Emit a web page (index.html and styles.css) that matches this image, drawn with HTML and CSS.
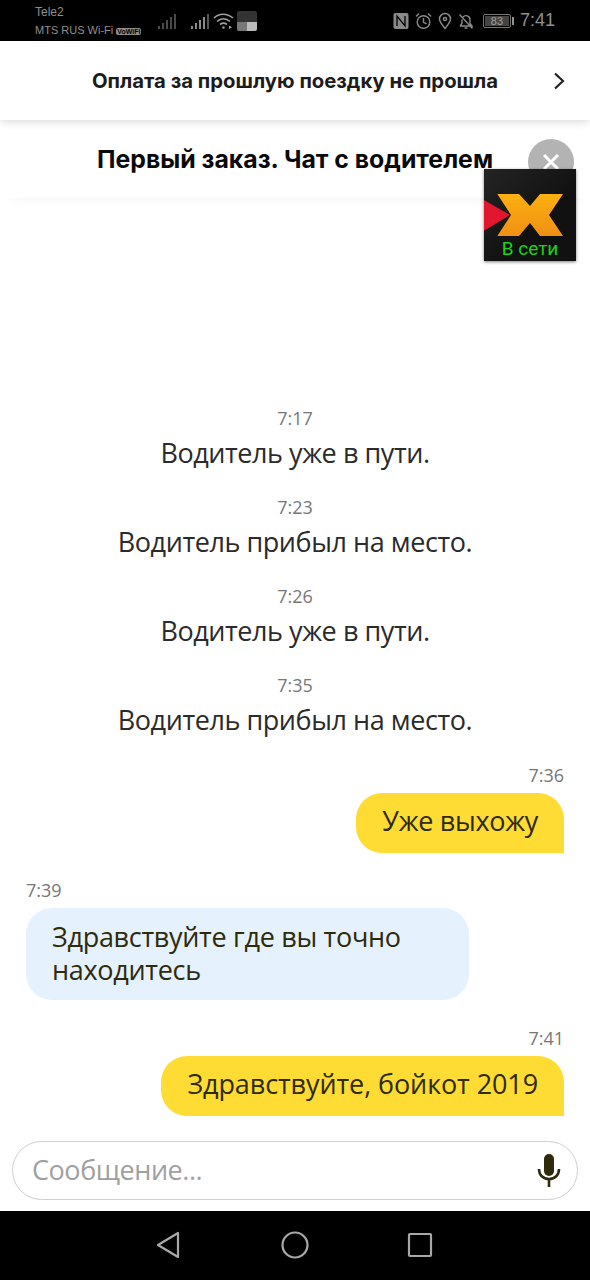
FILE: index.html
```html
<!DOCTYPE html>
<html lang="ru">
<head>
  <meta charset="UTF-8" />
  <title>Чат с водителем</title>
  <link rel="stylesheet" href="styles.css">
</head>
<body>
<div class="phone">

  <div class="statusBar">
    <div class="carriers">
      <div>Tele2</div>
      <div class="carrierTwo">MTS RUS Wi-Fi <span class="vowifi">VoWiFi</span></div>
    </div>
    <div class="signals">
      <svg width="20" height="18" viewBox="0 0 20 18"><g fill="#4a4a4a"><rect x="1" y="14" width="2" height="3"/><rect x="5" y="11" width="2" height="6"/><rect x="9" y="8" width="2" height="9"/><rect x="13" y="5" width="2" height="12"/><rect x="17" y="2" width="2" height="15"/></g></svg>
      <svg class="simTwo" width="20" height="18" viewBox="0 0 20 18"><g fill="#8a8a8a"><rect x="1" y="14" width="2" height="3"/><rect x="5" y="11" width="2" height="6"/><rect x="9" y="8" width="2" height="9"/><rect x="13" y="5" width="2" height="12"/></g><rect x="17" y="2" width="2" height="15" fill="#555"/></svg>
      <svg class="wifi" width="22" height="18" viewBox="0 0 22 18" fill="none" stroke="#a0a0a0" stroke-width="1.600"><path d="M1 6c5-5 13-5 19 0"/><path d="M4 9.500c4-3.500 9-3.500 13 0"/><path d="M7 12.500c2-1.500 5-1.500 7 0"/><circle cx="10.500" cy="15.500" r="1.200" fill="#a0a0a0" stroke="none"/><path d="M16 13.500v3.500l3-1.700z" fill="#a0a0a0" stroke="none"/></svg>
      <div class="thumb"><span></span><span></span></div>
    </div>
    <div class="statusRight">
      <svg width="16" height="18" viewBox="0 0 16 18"><rect x="0.500" y="1" width="15" height="16" rx="2" fill="#8a8a8a"/><path d="M4 14V4l8 10V4" fill="none" stroke="#000" stroke-width="1.300"/></svg>
      <svg width="17" height="18" viewBox="0 0 17 18" fill="none" stroke="#8a8a8a" stroke-width="1.400"><circle cx="8.500" cy="10" r="6.300"/><path d="M8.500 6v4.300l3 1.500M1 4.500l3-3M16 4.500l-3-3"/></svg>
      <svg width="14" height="18" viewBox="0 0 14 18" fill="none" stroke="#8a8a8a" stroke-width="1.500"><path d="M7 16.500C4 12.500 1.500 10 1.500 7a5.500 5.500 0 0 1 11 0c0 3-2.500 5.500-5.500 9.500z"/><circle cx="7" cy="7" r="1.600"/></svg>
      <svg width="16" height="18" viewBox="0 0 16 18" fill="none" stroke="#8a8a8a" stroke-width="1.400"><path d="M2 14h12l-2-2.500V7.500a4 4 0 0 0-7-2.500M4 7.500v4L2 14M6.500 16h3M1.500 2.500l13 14"/></svg>
      <div class="battery"><span class="batteryLevel">83</span></div>
      <span class="batteryTip"></span>
      <span class="clock">7:41</span>
    </div>
  </div>

  <div class="notice">
    <span class="noticeText">Оплата за прошлую поездку не прошла</span>
    <svg class="chevron" width="12" height="18" viewBox="0 0 12 18" fill="none" stroke="#222" stroke-width="2.200"><path d="M2 1.500l8 7.500-8 7.500"/></svg>
  </div>

  <div class="chatHead">
    <h1>Первый заказ. Чат с водителем</h1>
    <div class="closeBtn">
      <svg width="18" height="18" viewBox="0 0 18 18" stroke="#fff" stroke-width="3"><path d="M2 2l14 14M16 2L2 16"/></svg>
    </div>
  </div>

  <div class="overlayWidget">
    <svg width="92" height="92" viewBox="0 0 92 92">
      <defs>
        <linearGradient id="xFill" x1="0" y1="0" x2="0" y2="1">
          <stop offset="0" stop-color="#fdb011"/>
          <stop offset="1" stop-color="#f08f14"/>
        </linearGradient>
      </defs>
      <path d="M0 31l26 15L0 61.700z" fill="#e2162f"/>
      <path d="M13.300 25H35l11 12 10-12h23L65 46l14 21H56L46 54 35 67H13.300L27 46z" fill="url(#xFill)"/>
    </svg>
    <span class="onlineLabel">В сети</span>
  </div>

  <div class="chat">
    <div class="event">
      <div class="time">7:17</div>
      <div class="eventText">Водитель уже в пути.</div>
    </div>
    <div class="event">
      <div class="time">7:23</div>
      <div class="eventText">Водитель прибыл на место.</div>
    </div>
    <div class="event">
      <div class="time">7:26</div>
      <div class="eventText">Водитель уже в пути.</div>
    </div>
    <div class="event">
      <div class="time">7:35</div>
      <div class="eventText">Водитель прибыл на место.</div>
    </div>

    <div class="msg mine">
      <div class="time">7:36</div>
      <div class="bubble">Уже выхожу</div>
    </div>
    <div class="msg theirs">
      <div class="time">7:39</div>
      <div class="bubble">Здравствуйте где вы точно<br>находитесь</div>
    </div>
    <div class="msg mine last">
      <div class="time">7:41</div>
      <div class="bubble">Здравствуйте, бойкот 2019</div>
    </div>
  </div>

  <div class="inputWrap">
    <div class="inputBox">
      <span class="placeholder">Сообщение...</span>
      <svg width="24" height="33" viewBox="0 0 24 33"><rect x="7" y="0" width="10" height="22" rx="5" fill="#2f2a0c"/><path d="M2 15c0 6 4 10 10 10s10-4 10-10M12 25v8" fill="none" stroke="#2f2a0c" stroke-width="2.600"/></svg>
    </div>
  </div>

  <div class="navBar">
    <svg width="26" height="28" viewBox="0 0 26 28" fill="none" stroke="#a8a8a8" stroke-width="2.200" stroke-linejoin="round"><path d="M22 2v24L2 14z"/></svg>
    <svg width="28" height="28" viewBox="0 0 28 28" fill="none" stroke="#a8a8a8" stroke-width="2.200"><circle cx="14" cy="14" r="12.500"/></svg>
    <svg class="navSquare" width="26" height="26" viewBox="0 0 26 26" fill="none" stroke="#a8a8a8" stroke-width="2.200" stroke-linejoin="round"><rect x="2" y="2" width="22" height="22" rx="1"/></svg>
  </div>

</div>
</body>
</html>
```

FILE: styles.css
```css
* { box-sizing: border-box; }
html, body { margin: 0; padding: 0; }
body {
  background: #fff;
  font-family: "Open Sans", "Noto Sans", sans-serif;
  color: #2b2b2b;
}
.phone {
  width: 590px;
  height: 1280px;
  position: relative;
  display: flex;
  flex-direction: column;
  overflow: hidden;
}

/* status bar */
.statusBar {
  height: 41px;
  background: #000;
  color: #8f8f8f;
  display: flex;
  align-items: center;
  padding: 0 35px;
  flex: none;
}
.carriers {
  font-family: "Liberation Sans", sans-serif;
  font-size: 12px;
  line-height: 18px;
  width: 122px;
  padding-top: 2px;
  white-space: nowrap;
}
.carrierTwo { font-size: 11px; }
.vowifi {
  background: #8f8f8f;
  color: #000;
  font-size: 7px;
  padding: 0 1px;
  border-radius: 2px;
  font-weight: bold;
}
.signals {
  display: flex;
  align-items: center;
}
.simTwo { margin-left: 13px; }
.wifi { margin-left: 3px; }
.thumb {
  width: 20px;
  height: 20px;
  border-radius: 2px;
  background: #333;
  display: flex;
  align-items: flex-end;
  margin-left: 2px;
  overflow: hidden;
}
.thumb span { width: 50%; height: 9px; background: #777; }
.thumb span + span { background: #bbb; }
.statusRight {
  margin-left: auto;
  display: flex;
  align-items: center;
  gap: 6px;
}
.battery {
  width: 28px;
  height: 14px;
  border: 1px solid #777;
  border-radius: 2px;
  margin-left: 3px;
  padding: 1px;
  display: flex;
}
.batteryLevel {
  flex: 1;
  background: #444;
  color: #a0a0a0;
  font-family: "Liberation Sans", sans-serif;
  font-size: 11px;
  line-height: 10px;
  text-align: center;
}
.batteryTip {
  width: 2px;
  height: 8px;
  background: #8f8f8f;
  margin-left: -5px;
}
.clock {
  font-family: "Liberation Sans", sans-serif;
  font-size: 18px;
  color: #8f8f8f;
}

/* payment notice */
.notice {
  height: 79px;
  background: #fff;
  display: flex;
  align-items: center;
  justify-content: center;
  position: relative;
  flex: none;
  box-shadow: 0 2px 8px rgba(0,0,0,0.14);
  z-index: 2;
}
.noticeText {
  font-family: "Inter", "Roboto", sans-serif;
  font-weight: 700;
  font-size: 20.300px;
  color: #1c1c1c;
}
.chevron {
  position: absolute;
  right: 25px;
  top: 31px;
}

/* chat header */
.chatHead {
  height: 78px;
  flex: none;
  display: flex;
  align-items: center;
  justify-content: center;
  background: #fff;
  position: relative;
  box-shadow: 0 10px 14px -10px rgba(0,0,0,0.06);
}
.chatHead h1 {
  margin: 0;
  font-family: "Inter", "Roboto", sans-serif;
  font-weight: 700;
  font-size: 24.800px;
  color: #0a0a0a;
}
.closeBtn {
  position: absolute;
  left: 528px;
  top: 19px;
  width: 46px;
  height: 46px;
  border-radius: 50%;
  background: #b3b3b3;
  display: flex;
  align-items: center;
  justify-content: center;
}

/* floating app overlay */
.overlayWidget {
  position: absolute;
  left: 484px;
  top: 169px;
  width: 92px;
  height: 92px;
  background: linear-gradient(135deg, #242424, #111 60%);
  box-shadow: 0 1px 3px rgba(0,0,0,0.5);
  z-index: 5;
}
.overlayWidget svg { display: block; }
.onlineLabel {
  position: absolute;
  left: 0;
  right: 0;
  bottom: 1px;
  text-align: center;
  font-family: "Roboto", sans-serif;
  font-size: 19px;
  line-height: 22px;
  color: #19d419;
}

/* messages */
.chat {
  flex: 1;
  display: flex;
  flex-direction: column;
  justify-content: flex-end;
  padding: 0 26px;
}
.time {
  font-size: 18px;
  line-height: 20px;
  color: #777;
}
.event {
  text-align: center;
  margin-bottom: 27px;
}
.event .time { line-height: 18px; }
.eventText {
  font-size: 27px;
  line-height: 36px;
  margin-top: 8px;
  letter-spacing: -0.440px;
}
.msg { display: flex; flex-direction: column; }
.msg.mine { align-items: flex-end; }
.msg.theirs { align-items: flex-start; margin-top: 27px; }
.msg.last { margin-top: 28px; }
.bubble {
  margin-top: 8px;
  font-size: 27px;
  line-height: 36px;
  color: #2f2a0c;
  letter-spacing: -0.300px;
  padding: 10px 26px 14px;
}
.mine .bubble {
  background: #ffdc34;
  border-radius: 26px 26px 0 26px;
}
.last .bubble { letter-spacing: -0.100px; }
.theirs .bubble {
  background: #e5f1fd;
  border-radius: 26px;
  width: 443px;
  padding: 12px 26px 14px;
  line-height: 33px;
}

/* input */
.inputWrap {
  height: 95px;
  flex: none;
  padding: 25px 12px 0;
}
.inputBox {
  height: 59px;
  border: 1.500px solid #cfcfcf;
  border-radius: 30px;
  display: flex;
  align-items: center;
  justify-content: space-between;
  padding: 0 16px 2px 19px;
}
.inputBox svg { margin-top: 2px; }
.placeholder {
  font-size: 27px;
  color: #a0a0a0;
  letter-spacing: -0.450px;
}

/* android nav */
.navBar {
  height: 69px;
  flex: none;
  background: #000;
  display: flex;
  align-items: center;
  justify-content: center;
  gap: 99px;
  padding: 0 2px 2px 0;
}
.navSquare { margin-left: -1px; }
```
